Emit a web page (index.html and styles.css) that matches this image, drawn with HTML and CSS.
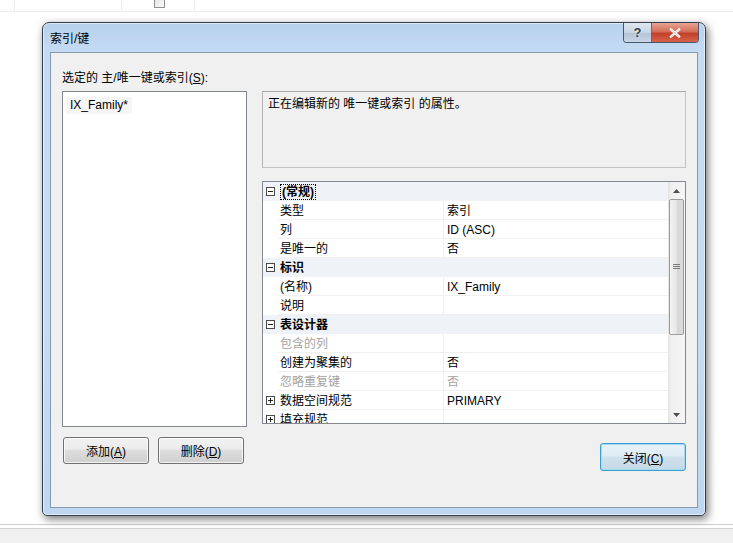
FILE: index.html
```html
<!DOCTYPE html>
<html>
  <head>
    <meta charset="utf-8">
    <link rel="stylesheet" href="styles.css">
  </head>
  <body>
    <div class="desk">
      <div class="toprow">
        <div class="tcell c1"></div>
        <div class="tcell c2"></div>
        <div class="tcell c3"><span class="chk"></span></div>
        <div class="tcell c4"></div>
      </div>
      <div class="filler"></div>
      <div class="statusbar"></div>

      <!-- 索引/键 对话框 -->
      <div class="window">
        <div class="titlebar">
          <span class="title">索引/键</span>
          <div class="caption-btns">
            <div class="cap help">?</div>
            <div class="cap close">
              <svg width="12" height="10" viewBox="0 0 12 10"><path d="M2 1.5 L10 8.5 M10 1.5 L2 8.5" stroke="#fff" stroke-width="2.4" stroke-linecap="square"/><path d="M2 1.5 L10 8.5 M10 1.5 L2 8.5" stroke="#6d2a20" stroke-width="0.6" opacity="0.35"/></svg>
            </div>
          </div>
        </div>

        <div class="client">
          <div class="label">选定的 主/唯一键或索引(<u>S</u>):</div>
          <div></div>

          <div class="listbox">
            <span class="list-item">IX_Family*</span>
          </div>

          <div class="right-col">
            <div class="desc">正在编辑新的 唯一键或索引 的属性。</div>
            <div class="pgrid">
              <div class="pg-rows">
                <div class="pg-row cat">
                  <span class="pg-margin"><svg class="exp" width="9" height="9" viewBox="0 0 9 9"><rect x="0.5" y="0.5" width="8" height="8" fill="#fff" stroke="#4a4a4a"/><path d="M2 4.5 H7" stroke="#222"/></svg></span>
                  <span class="pg-name"><span class="focus">(常规)</span></span>
                </div>
                <div class="pg-row">
                  <span class="pg-margin"></span><span class="pg-name">类型</span><span class="pg-val">索引</span>
                </div>
                <div class="pg-row">
                  <span class="pg-margin"></span><span class="pg-name">列</span><span class="pg-val">ID (ASC)</span>
                </div>
                <div class="pg-row">
                  <span class="pg-margin"></span><span class="pg-name">是唯一的</span><span class="pg-val">否</span>
                </div>
                <div class="pg-row cat">
                  <span class="pg-margin"><svg class="exp" width="9" height="9" viewBox="0 0 9 9"><rect x="0.5" y="0.5" width="8" height="8" fill="#fff" stroke="#4a4a4a"/><path d="M2 4.5 H7" stroke="#222"/></svg></span>
                  <span class="pg-name">标识</span>
                </div>
                <div class="pg-row">
                  <span class="pg-margin"></span><span class="pg-name">(名称)</span><span class="pg-val">IX_Family</span>
                </div>
                <div class="pg-row">
                  <span class="pg-margin"></span><span class="pg-name">说明</span><span class="pg-val"></span>
                </div>
                <div class="pg-row cat">
                  <span class="pg-margin"><svg class="exp" width="9" height="9" viewBox="0 0 9 9"><rect x="0.5" y="0.5" width="8" height="8" fill="#fff" stroke="#4a4a4a"/><path d="M2 4.5 H7" stroke="#222"/></svg></span>
                  <span class="pg-name">表设计器</span>
                </div>
                <div class="pg-row disabled">
                  <span class="pg-margin"></span><span class="pg-name">包含的列</span><span class="pg-val"></span>
                </div>
                <div class="pg-row">
                  <span class="pg-margin"></span><span class="pg-name">创建为聚集的</span><span class="pg-val">否</span>
                </div>
                <div class="pg-row disabled">
                  <span class="pg-margin"></span><span class="pg-name">忽略重复键</span><span class="pg-val">否</span>
                </div>
                <div class="pg-row">
                  <span class="pg-margin"><svg class="exp" width="9" height="9" viewBox="0 0 9 9"><rect x="0.5" y="0.5" width="8" height="8" fill="#fff" stroke="#4a4a4a"/><path d="M2 4.5 H7 M4.5 2 V7" stroke="#222"/></svg></span><span class="pg-name">数据空间规范</span><span class="pg-val">PRIMARY</span>
                </div>
                <div class="pg-row">
                  <span class="pg-margin"><svg class="exp" width="9" height="9" viewBox="0 0 9 9"><rect x="0.5" y="0.5" width="8" height="8" fill="#fff" stroke="#4a4a4a"/><path d="M2 4.5 H7 M4.5 2 V7" stroke="#222"/></svg></span><span class="pg-name">填充规范</span><span class="pg-val"></span>
                </div>
              </div>
              <div class="vscroll">
                <div class="sb-arrow"><svg width="7" height="4" viewBox="0 0 7 4"><path d="M0 4 L3.5 0 L7 4 Z" fill="#4d4d4d"/></svg></div>
                <div class="sb-thumb"><svg width="7" height="6" viewBox="0 0 7 6"><path d="M0 0.5 H7 M0 2.5 H7 M0 4.5 H7" stroke="#7a7a7a"/></svg></div>
                <div class="sb-track"></div>
                <div class="sb-arrow"><svg width="7" height="4" viewBox="0 0 7 4"><path d="M0 0 L3.5 4 L7 0 Z" fill="#4d4d4d"/></svg></div>
              </div>
            </div>
          </div>

          <div class="btn-row">
            <button class="btn">添加(<u>A</u>)</button>
            <button class="btn">删除(<u>D</u>)</button>
          </div>
          <div class="btn-row right">
            <button class="btn default">关闭(<u>C</u>)</button>
          </div>
        </div>
      </div>
    </div>
  </body>
</html>
```

FILE: styles.css
```css
body {
  margin: 0;
  padding: 0;
  font-family: "Liberation Sans", "Noto Sans CJK SC", sans-serif;
  font-size: 12px;
  color: #000;
  background: #fff;
}
.desk {
  position: relative;
  width: 733px;
  height: 543px;
  display: flex;
  flex-direction: column;
  overflow: hidden;
}

/* 背景里的表格和状态栏 */
.toprow {
  display: flex;
  height: 11px;
  border-bottom: 1px solid #ececec;
}
.tcell {
  border-right: 1px solid #ececec;
  position: relative;
}
.c1 { width: 14px; }
.c2 { width: 106px; }
.c3 { width: 72px; }
.c4 { flex: 1; border-right: none; }
.chk {
  position: absolute;
  left: 32px;
  top: -3px;
  width: 9px;
  height: 9px;
  border: 1px solid #8e8f8f;
  background: linear-gradient(135deg, #e4e4e4, #fbfbfb);
}
.filler {
  flex: 1;
}
.statusbar {
  height: 14px;
  border-top: 1px solid #d2d2d2;
  margin-top: 4px;
  background: #f0f0f0;
  position: relative;
}
.statusbar::before {
  content: "";
  position: absolute;
  left: 0;
  right: 0;
  top: -5px;
  border-top: 1px solid #cfcfcf;
}

/* 窗口 */
.window {
  position: absolute;
  left: 42px;
  top: 22px;
  width: 664px;
  height: 494px;
  box-sizing: border-box;
  border: 1px solid #34404d;
  border-radius: 7px 7px 5px 5px;
  background: linear-gradient(#b7d1ed, #c4dbf3 28px, #c6dcf3 60%, #bed6f0);
  box-shadow: 2px 3px 9px rgba(0, 0, 0, 0.55), inset 0 0 0 1px rgba(255, 255, 255, 0.55);
  padding: 0 7px 7px 7px;
  display: flex;
  flex-direction: column;
}
.titlebar {
  height: 29px;
  display: flex;
  align-items: center;
  position: relative;
}
.title {
  font-size: 12px;
  margin-top: 0;
}
.caption-btns {
  position: absolute;
  right: -1px;
  top: 0;
  display: flex;
  height: 19px;
  border: 1px solid #48576a;
  border-top: none;
  border-radius: 0 0 4px 4px;
  overflow: hidden;
}
.cap {
  display: flex;
  align-items: center;
  justify-content: center;
}
.help {
  width: 27px;
  background: linear-gradient(#dfe7f1, #c9d5e3 50%, #b3c2d4 51%, #c8d6e6);
  border-right: 1px solid #5d6b7c;
  color: #2f3a48;
  font-weight: bold;
  font-size: 13px;
  text-shadow: 0 0 2px #fff;
}
.close {
  width: 46px;
  background: linear-gradient(#e8a493, #d56e59 45%, #c2412b 55%, #d8624a);
}

.client {
  flex: 1;
  border: 1px solid #8699ae;
  background: #f0f0f0;
  padding: 16px 11px 0 11px;
  display: grid;
  grid-template-columns: 185px 424px;
  grid-template-rows: 22px 336px auto;
  column-gap: 15px;
}
.label {
  line-height: 16px;
  padding-top: 1px;
  white-space: nowrap;
}

.listbox {
  box-sizing: border-box;
  border: 1px solid #828790;
  background: #fff;
  padding: 5px 3px;
}
.list-item {
  display: inline-block;
  padding: 0 4px;
  line-height: 17px;
  background: #f6f6f6;
}

.right-col {
  display: flex;
  flex-direction: column;
  gap: 13px;
}
.desc {
  box-sizing: border-box;
  height: 77px;
  border: 1px solid #c4c4c4;
  border-top-color: #a9a9a9;
  border-left-color: #b3b3b3;
  padding: 4px 5px;
  line-height: 16px;
}

/* 属性网格 */
.pgrid {
  box-sizing: border-box;
  height: 243px;
  border: 1px solid #828790;
  background: #fff;
  display: flex;
  overflow: hidden;
}
.pg-rows {
  flex: 1;
  overflow: hidden;
}
.pg-row {
  display: flex;
  height: 19px;
  line-height: 17px;
  white-space: nowrap;
}
.pg-margin {
  width: 15px;
  flex: none;
  display: flex;
  align-items: center;
  justify-content: center;
}
.pg-name {
  width: 166px;
  flex: none;
  padding: 2px 0 0 2px;
  box-sizing: border-box;
  border-right: 1px solid #f0f0f0;
  border-bottom: 1px solid #f0f0f0;
}
.pg-val {
  flex: 1;
  padding: 2px 0 0 3px;
  border-bottom: 1px solid #f0f0f0;
}
.pg-row.cat {
  background: #eff3f7;
  font-weight: bold;
}
.pg-row.cat .pg-name {
  border: none;
}
.pg-row.disabled {
  color: #a3a3a3;
}
.focus {
  border: 1px dotted #000;
  padding: 0 1px;
}

.vscroll {
  width: 17px;
  flex: none;
  display: flex;
  flex-direction: column;
  background: linear-gradient(90deg, #e3e3e3, #f0f0f0 20%, #f5f5f5);
}
.sb-arrow {
  height: 17px;
  display: flex;
  align-items: center;
  justify-content: center;
}
.sb-thumb {
  box-sizing: border-box;
  height: 136px;
  margin: 0 1px;
  border: 1px solid #9b9b9b;
  border-radius: 2px;
  background: linear-gradient(90deg, #f3f3f3, #e6e6e6 50%, #d6d6d6 51%, #dcdcdc);
  display: flex;
  align-items: center;
  justify-content: center;
}
.sb-track {
  flex: 1;
}

/* 按钮 */
.btn-row {
  display: flex;
  gap: 9px;
  margin-top: 10px;
  margin-left: 1px;
}
.btn-row.right {
  justify-content: flex-end;
  margin-top: 16px;
}
.btn {
  width: 86px;
  height: 27px;
  padding: 0;
  font: inherit;
  font-size: 12px;
  color: #000;
  border: 1px solid #707070;
  border-radius: 3px;
  background: linear-gradient(#f2f2f2, #ebebeb 45%, #dddddd 50%, #cfcfcf);
  box-shadow: inset 0 0 0 1px rgba(255, 255, 255, 0.75);
}
.btn.default {
  width: 86px;
  height: 28px;
  border-color: #3c9fd0;
  background: linear-gradient(#e8f2f8, #dfecf3 45%, #cfe1ec 50%, #c5d9e6);
  box-shadow: inset 0 0 0 1px #9fdaf6;
}
```
